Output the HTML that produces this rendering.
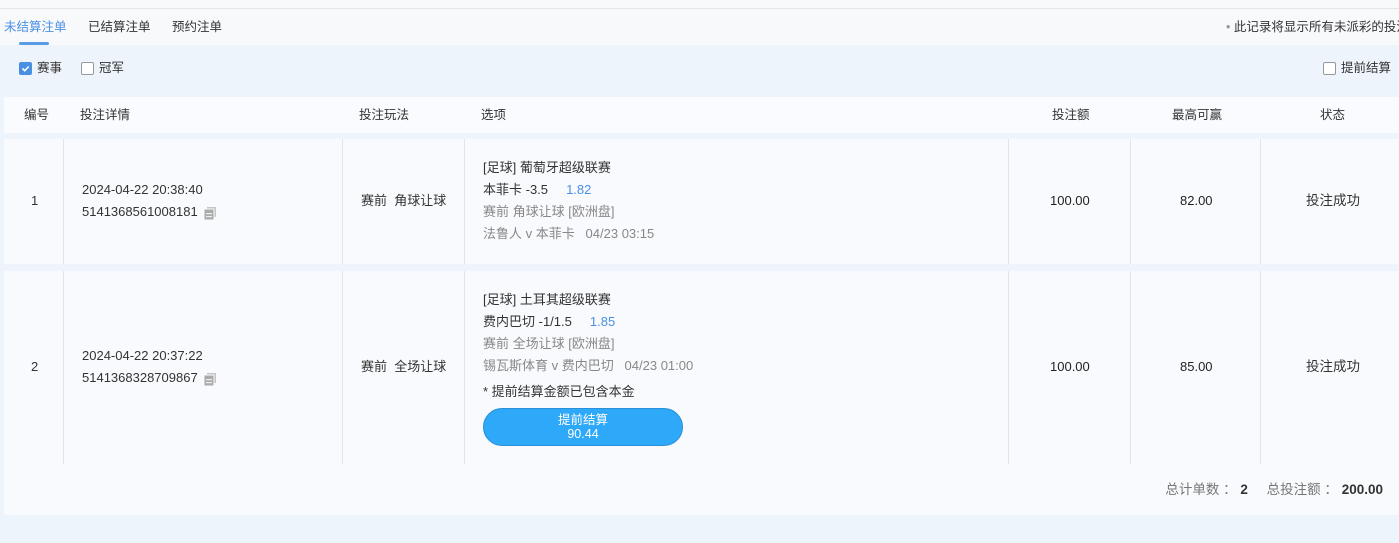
<!DOCTYPE html>
<html><head><meta charset="utf-8"><style>
*{margin:0;padding:0;box-sizing:border-box}
body{width:1399px;height:543px;overflow:hidden;background:#f8f9fb;font-family:"Liberation Sans","Noto Sans CJK SC",sans-serif;font-size:13px;color:#333;position:relative}
.a{position:absolute;white-space:nowrap;line-height:16px}
.vl{position:absolute;width:1px;background:#e2e5ea}
.g{color:#888}
.b{color:#4a90e2}
.cb{position:absolute;width:13px;height:13px;border:1px solid #999;border-radius:2px;background:#fff}
.cp{display:inline-block;width:14px;height:14px;vertical-align:-4px;margin-left:5px;position:relative}
</style></head><body>
<div class="a" style="left:0;top:8px;width:1399px;height:1px;background:#e3e5e9"></div>
<div class="a" style="left:4px;top:19px;color:#4a90e2;font-size:12.5px">未结算注单</div>
<div class="a" style="left:88px;top:19px;font-size:12.5px">已结算注单</div>
<div class="a" style="left:172px;top:19px;font-size:12.5px">预约注单</div>
<div class="a" style="left:19px;top:42px;width:30px;height:3px;background:#5a9be6;border-radius:2px"></div>
<div class="a" style="left:1226px;top:19px;font-size:12.5px"><span style="color:#999">•</span> 此记录将显示所有未派彩的投注</div>
<div class="a" style="left:0;top:45px;width:1399px;height:498px;background:#eef4fc"></div>
<div class="cb" style="left:19px;top:62px;background:#4a90e2;border-color:#4a90e2"><svg width="11" height="11" style="position:absolute;left:0;top:0"><path d="M2.5 5.5l2.2 2.2L8.8 3.5" stroke="#fff" stroke-width="1.6" fill="none"/></svg></div>
<div class="a" style="left:37px;top:60px;font-size:12.5px">赛事</div>
<div class="cb" style="left:81px;top:62px"></div>
<div class="a" style="left:99px;top:60px;font-size:12.5px">冠军</div>
<div class="cb" style="left:1323px;top:62px"></div>
<div class="a" style="left:1341px;top:60px;font-size:12.5px">提前结算</div>
<div class="a" style="left:4px;top:97px;width:1395px;height:36px;background:#f9fbfe"></div>
<div class="a" style="left:24px;top:107px;font-size:12.5px">编号</div>
<div class="a" style="left:80px;top:107px;font-size:12.5px">投注详情</div>
<div class="a" style="left:359px;top:107px;font-size:12.5px">投注玩法</div>
<div class="a" style="left:481px;top:107px;font-size:12.5px">选项</div>
<div class="a" style="left:1052px;top:107px;font-size:12.5px">投注额</div>
<div class="a" style="left:1172px;top:107px;font-size:12.5px">最高可赢</div>
<div class="a" style="left:1320px;top:107px;font-size:12.5px">状态</div>
<div class="a" style="left:4px;top:139px;width:1395px;height:125px;background:#f9fafd"></div>
<div class="a" style="left:4px;top:271px;width:1395px;height:244px;background:#f9fafd"></div>
<div class="vl" style="left:63px;top:139px;height:125px"></div><div class="vl" style="left:342px;top:139px;height:125px"></div><div class="vl" style="left:464px;top:139px;height:125px"></div><div class="vl" style="left:1008px;top:139px;height:125px"></div><div class="vl" style="left:1130px;top:139px;height:125px"></div><div class="vl" style="left:1260px;top:139px;height:125px"></div>
<div class="vl" style="left:63px;top:271px;height:193px"></div><div class="vl" style="left:342px;top:271px;height:193px"></div><div class="vl" style="left:464px;top:271px;height:193px"></div><div class="vl" style="left:1008px;top:271px;height:193px"></div><div class="vl" style="left:1130px;top:271px;height:193px"></div><div class="vl" style="left:1260px;top:271px;height:193px"></div>
<!-- row1 -->
<div class="a" style="left:31px;top:193px">1</div>
<div class="a" style="left:82px;top:182px">2024-04-22 20:38:40</div>
<div class="a" style="left:82px;top:204px">5141368561008181<svg class="cp" viewBox="0 0 14 14"><rect x="4" y="1" width="9" height="10" fill="#c4c4c4"/><rect x="1" y="3" width="10" height="11" fill="#aaa" stroke="#f9fafd"/><rect x="3" y="7" width="6" height="1.2" fill="#eee"/><rect x="3" y="10" width="6" height="1.2" fill="#eee"/></svg></div>
<div class="a" style="left:361px;top:193px">赛前&nbsp;&nbsp;角球让球</div>
<div class="a" style="left:483px;top:160px">[足球] 葡萄牙超级联赛</div>
<div class="a" style="left:483px;top:182px">本菲卡 -3.5 &nbsp;&nbsp;&nbsp;&nbsp;<span class="b">1.82</span></div>
<div class="a g" style="left:483px;top:204px">赛前 角球让球 [欧洲盘]</div>
<div class="a g" style="left:483px;top:226px">法鲁人 v 本菲卡&nbsp;&nbsp;&nbsp;04/23 03:15</div>
<div class="a" style="left:1050px;top:193px;color:#222">100.00</div>
<div class="a" style="left:1180px;top:193px;color:#222">82.00</div>
<div class="a" style="left:1306px;top:193px;font-size:13.5px">投注成功</div>
<!-- row2 -->
<div class="a" style="left:31px;top:359px">2</div>
<div class="a" style="left:82px;top:348px">2024-04-22 20:37:22</div>
<div class="a" style="left:82px;top:370px">5141368328709867<svg class="cp" viewBox="0 0 14 14"><rect x="4" y="1" width="9" height="10" fill="#c4c4c4"/><rect x="1" y="3" width="10" height="11" fill="#aaa" stroke="#f9fafd"/><rect x="3" y="7" width="6" height="1.2" fill="#eee"/><rect x="3" y="10" width="6" height="1.2" fill="#eee"/></svg></div>
<div class="a" style="left:361px;top:359px">赛前&nbsp;&nbsp;全场让球</div>
<div class="a" style="left:483px;top:292px">[足球] 土耳其超级联赛</div>
<div class="a" style="left:483px;top:314px">费内巴切 -1/1.5 &nbsp;&nbsp;&nbsp;&nbsp;<span class="b">1.85</span></div>
<div class="a g" style="left:483px;top:336px">赛前 全场让球 [欧洲盘]</div>
<div class="a g" style="left:483px;top:358px">锡瓦斯体育 v 费内巴切&nbsp;&nbsp;&nbsp;04/23 01:00</div>
<div class="a" style="left:483px;top:384px">* 提前结算金额已包含本金</div>
<div class="a" style="left:483px;top:408px;width:200px;height:38px;border-radius:19px;background:#2ea8f8;border:1px solid #2a8fd8;color:#fff;text-align:center;line-height:14px;padding-top:4px;font-size:12.5px">提前结算<br>90.44</div>
<div class="a" style="left:1050px;top:359px;color:#222">100.00</div>
<div class="a" style="left:1180px;top:359px;color:#222">85.00</div>
<div class="a" style="left:1306px;top:359px;font-size:13.5px">投注成功</div>
<div class="a" style="right:16px;top:482px;font-size:13.5px"><span style="color:#777">总计单数 ：</span> <b style="color:#333">2</b>&nbsp;&nbsp;&nbsp;&nbsp;&nbsp;<span style="color:#777">总投注额 ：</span> <b style="color:#333">200.00</b></div>
</body></html>
